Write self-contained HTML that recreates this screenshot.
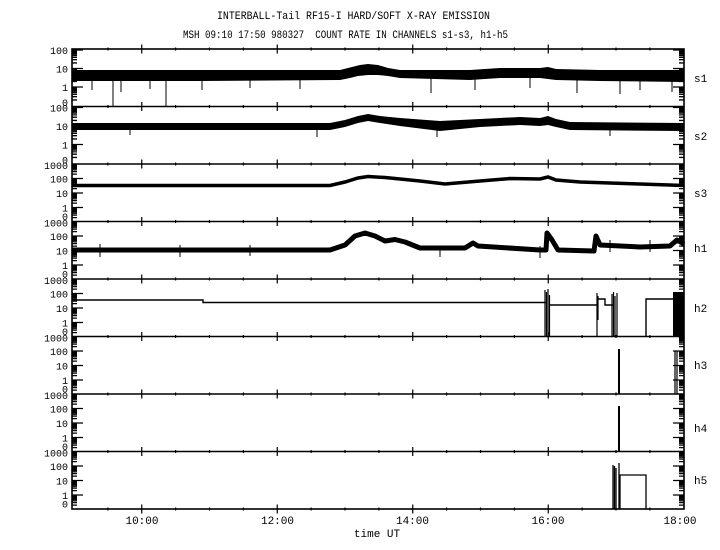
<!DOCTYPE html>
<html><head><meta charset="utf-8"><style>
html,body{margin:0;padding:0;background:#fff;}
svg{display:block;}
text{font-family:"Liberation Mono","DejaVu Sans Mono",monospace;font-size:11px;fill:#000;}
.tl{font-size:10px;}
</style></head><body>
<svg width="720" height="550" viewBox="0 0 720 550" xmlns="http://www.w3.org/2000/svg">
<defs>
<g id="tx" stroke="#000" stroke-width="1.2" fill="none">
<path d="M107.9,-1.5v3M175.6,-1.5v3M209.5,-1.5v3M243.4,-1.5v3M311.1,-1.5v3M345,-1.5v3M378.9,-1.5v3M446.6,-1.5v3M480.5,-1.5v3M514.4,-1.5v3M582.1,-1.5v3M616,-1.5v3M649.9,-1.5v3"/>
<path d="M141.75,-4.5v9M277.25,-4.5v9M412.75,-4.5v9M548.25,-4.5v9"/>
</g>
<g id="ya" stroke="#000" stroke-width="1.3" fill="none">
<path d="M0,1h11M0,19.5h11M0,38h11"/>
<path d="M0,13.93h5M0,10.67h5M0,8.36h5M0,6.57h5M0,5.11h5M0,3.87h5M0,2.79h5M0,1.85h5M0,32.43h5M0,29.17h5M0,26.86h5M0,25.07h5M0,23.61h5M0,22.37h5M0,21.29h5M0,20.35h5M0,50.93h5M0,47.67h5M0,45.36h5M0,43.57h5M0,42.11h5M0,40.87h5M0,39.79h5M0,38.85h5"/>
</g>
<g id="yb" stroke="#000" stroke-width="1.3" fill="none">
<path d="M0,14.5h11M0,29h11M0,43.5h11"/>
<path d="M0,10.14h5M0,7.58h5M0,5.77h5M0,4.36h5M0,3.22h5M0,2.25h5M0,1.41h5M0,0.67h5M0,24.64h5M0,22.08h5M0,20.27h5M0,18.86h5M0,17.72h5M0,16.75h5M0,15.91h5M0,15.17h5M0,39.14h5M0,36.58h5M0,34.77h5M0,33.36h5M0,32.22h5M0,31.25h5M0,30.41h5M0,29.67h5M0,53.64h5M0,51.08h5M0,49.27h5M0,47.86h5M0,46.72h5M0,45.75h5M0,44.91h5M0,44.17h5"/>
</g>
<g id="la" text-anchor="end" class="tl">
<text class="tl" x="68" y="5">100</text><text class="tl" x="68" y="23.5">10</text><text class="tl" x="68" y="42">1</text><text class="tl" x="68" y="57">0</text>
</g>
<g id="lb" text-anchor="end">
<text class="tl" x="68" y="5">1000</text><text class="tl" x="68" y="18.5">100</text><text class="tl" x="68" y="33">10</text><text class="tl" x="68" y="47.5">1</text><text class="tl" x="68" y="56">0</text>
</g>
</defs>

<text x="217" y="19" textLength="273" lengthAdjust="spacingAndGlyphs">INTERBALL-Tail RF15-I HARD/SOFT X-RAY EMISSION</text>
<text x="183" y="38" textLength="325" lengthAdjust="spacingAndGlyphs" xml:space="preserve">MSH 09:10 17:50 980327  COUNT RATE IN CHANNELS s1-s3, h1-h5</text>

<rect x="72" y="49" width="612" height="460" fill="none" stroke="#000" stroke-width="1.6"/>
<g stroke="#000" stroke-width="1.4">
<path d="M72,106.5H684M72,164H684M72,221.5H684M72,279H684M72,336.5H684M72,394H684M72,451.5H684"/>
</g>
<use href="#tx" y="49"/><use href="#tx" y="106.5"/><use href="#tx" y="164"/><use href="#tx" y="221.5"/>
<use href="#tx" y="279"/><use href="#tx" y="336.5"/><use href="#tx" y="394"/><use href="#tx" y="451.5"/><use href="#tx" y="509"/>

<use href="#ya" transform="translate(72,49)"/><use href="#ya" transform="translate(684,49) scale(-1,1)"/>
<use href="#ya" transform="translate(72,106.5)"/><use href="#ya" transform="translate(684,106.5) scale(-1,1)"/>
<use href="#yb" transform="translate(72,164)"/><use href="#yb" transform="translate(684,164) scale(-1,1)"/>
<use href="#yb" transform="translate(72,221.5)"/><use href="#yb" transform="translate(684,221.5) scale(-1,1)"/>
<use href="#yb" transform="translate(72,279)"/><use href="#yb" transform="translate(684,279) scale(-1,1)"/>
<use href="#yb" transform="translate(72,336.5)"/><use href="#yb" transform="translate(684,336.5) scale(-1,1)"/>
<use href="#yb" transform="translate(72,394)"/><use href="#yb" transform="translate(684,394) scale(-1,1)"/>
<use href="#yb" transform="translate(72,451.5)"/><use href="#yb" transform="translate(684,451.5) scale(-1,1)"/>

<use href="#la" y="49"/><use href="#la" y="106.5"/>
<use href="#lb" y="164"/><use href="#lb" y="221.5"/><use href="#lb" y="279"/><use href="#lb" y="336.5"/><use href="#lb" y="394"/><use href="#lb" y="451.5"/>

<g>
<text x="694" y="82">s1</text><text x="694" y="140">s2</text><text x="694" y="197">s3</text><text x="694" y="252">h1</text>
<text x="694" y="312">h2</text><text x="694" y="369">h3</text><text x="694" y="432">h4</text><text x="694" y="484">h5</text>
</g>

<polygon fill="#000" points="72,70 200,70 340,70 352,67 360,65 368,64 378,65 388,68 400,70 470,70 500,68 540,68 548,67 556,69 600,70 684,70 684,82 600,81 556,80 540,78 500,78 470,80 400,78 388,76 378,75 368,75 358,76 350,78 340,80 200,81 72,81"/>
<path stroke="#000" stroke-width="1" d="M113,80V106M166,80V106M92,80V90M121,80V92M150,80V89M202,80V90M250,80V88M300,80V89M431,78V93M475,78V90M530,78V88M577,80V93M620,80V94M640,80V90M672,80V92"/>
<polygon fill="#000" points="72,123 330,123 345,120 358,116 368,114 380,116 400,118 440,121 480,119 520,117 540,118 548,116 556,119 570,122 684,123 684,131 570,130 556,127 548,125 540,126 520,125 480,127 440,131 400,126 380,123 368,121 358,123 345,127 330,130 72,130"/>
<path stroke="#000" stroke-width="1" d="M317,128V137M437,130V137M130,128V135M610,129V136"/>
<polyline fill="none" stroke="#000" stroke-width="3.5" points="72,185.5 330,185.5 345,182 358,178 368,176.5 385,177.5 420,181 445,184 480,181 510,178.5 540,179 548,177 556,180 580,182 640,184 684,185.5"/>
<polyline fill="none" stroke="#000" stroke-width="5" stroke-linejoin="round" points="72,250 330,250 345,245 355,236 365,233 375,236 385,241 395,239.5 405,242 420,248 465,248 473,243 478,246 540,250 546,250 547,233 552,240 558,250 594,251 596,236 600,245 640,247 670,246 677,240 684,244"/>
<path stroke="#000" stroke-width="1" d="M100,244V257M180,245V257M250,245V256M440,246V257M540,246V258M610,240V252M650,240V252"/>
<path fill="none" stroke="#000" stroke-width="1.4" d="M72,300H203V302.5H546M549,305H597M597,299H605V305H613M646,336.5V299H673"/>
<path fill="none" stroke="#000" stroke-width="1.2" d="M545,290V336.5M546.5,292V336.5M548,289V336.5M549.5,295V336.5M597,293V336.5M598,296V320M612,294V336.5M613.5,292V336.5M615,296V336.5M617,293V336.5"/>
<rect x="673" y="292" width="11" height="44.5" fill="#000"/>
<path stroke="#000" stroke-width="2" d="M619,349V394"/>
<path stroke="#000" stroke-width="1.2" d="M675,351V394M677,351V394"/>
<path stroke="#000" stroke-width="2" d="M619,406V451.5"/>
<path stroke="#000" stroke-width="1.3" d="M613,465V509M614.5,466V509M616,468V509M619,463V509"/>
<path fill="none" stroke="#000" stroke-width="1.3" d="M620,509V475H646V509"/>

<g text-anchor="middle">
<text x="142" y="524">10:00</text><text x="277.5" y="524">12:00</text><text x="412.5" y="524">14:00</text><text x="548" y="524">16:00</text><text x="680" y="524">18:00</text>
<text x="377" y="537">time UT</text>
</g>
</svg>
</body></html>
